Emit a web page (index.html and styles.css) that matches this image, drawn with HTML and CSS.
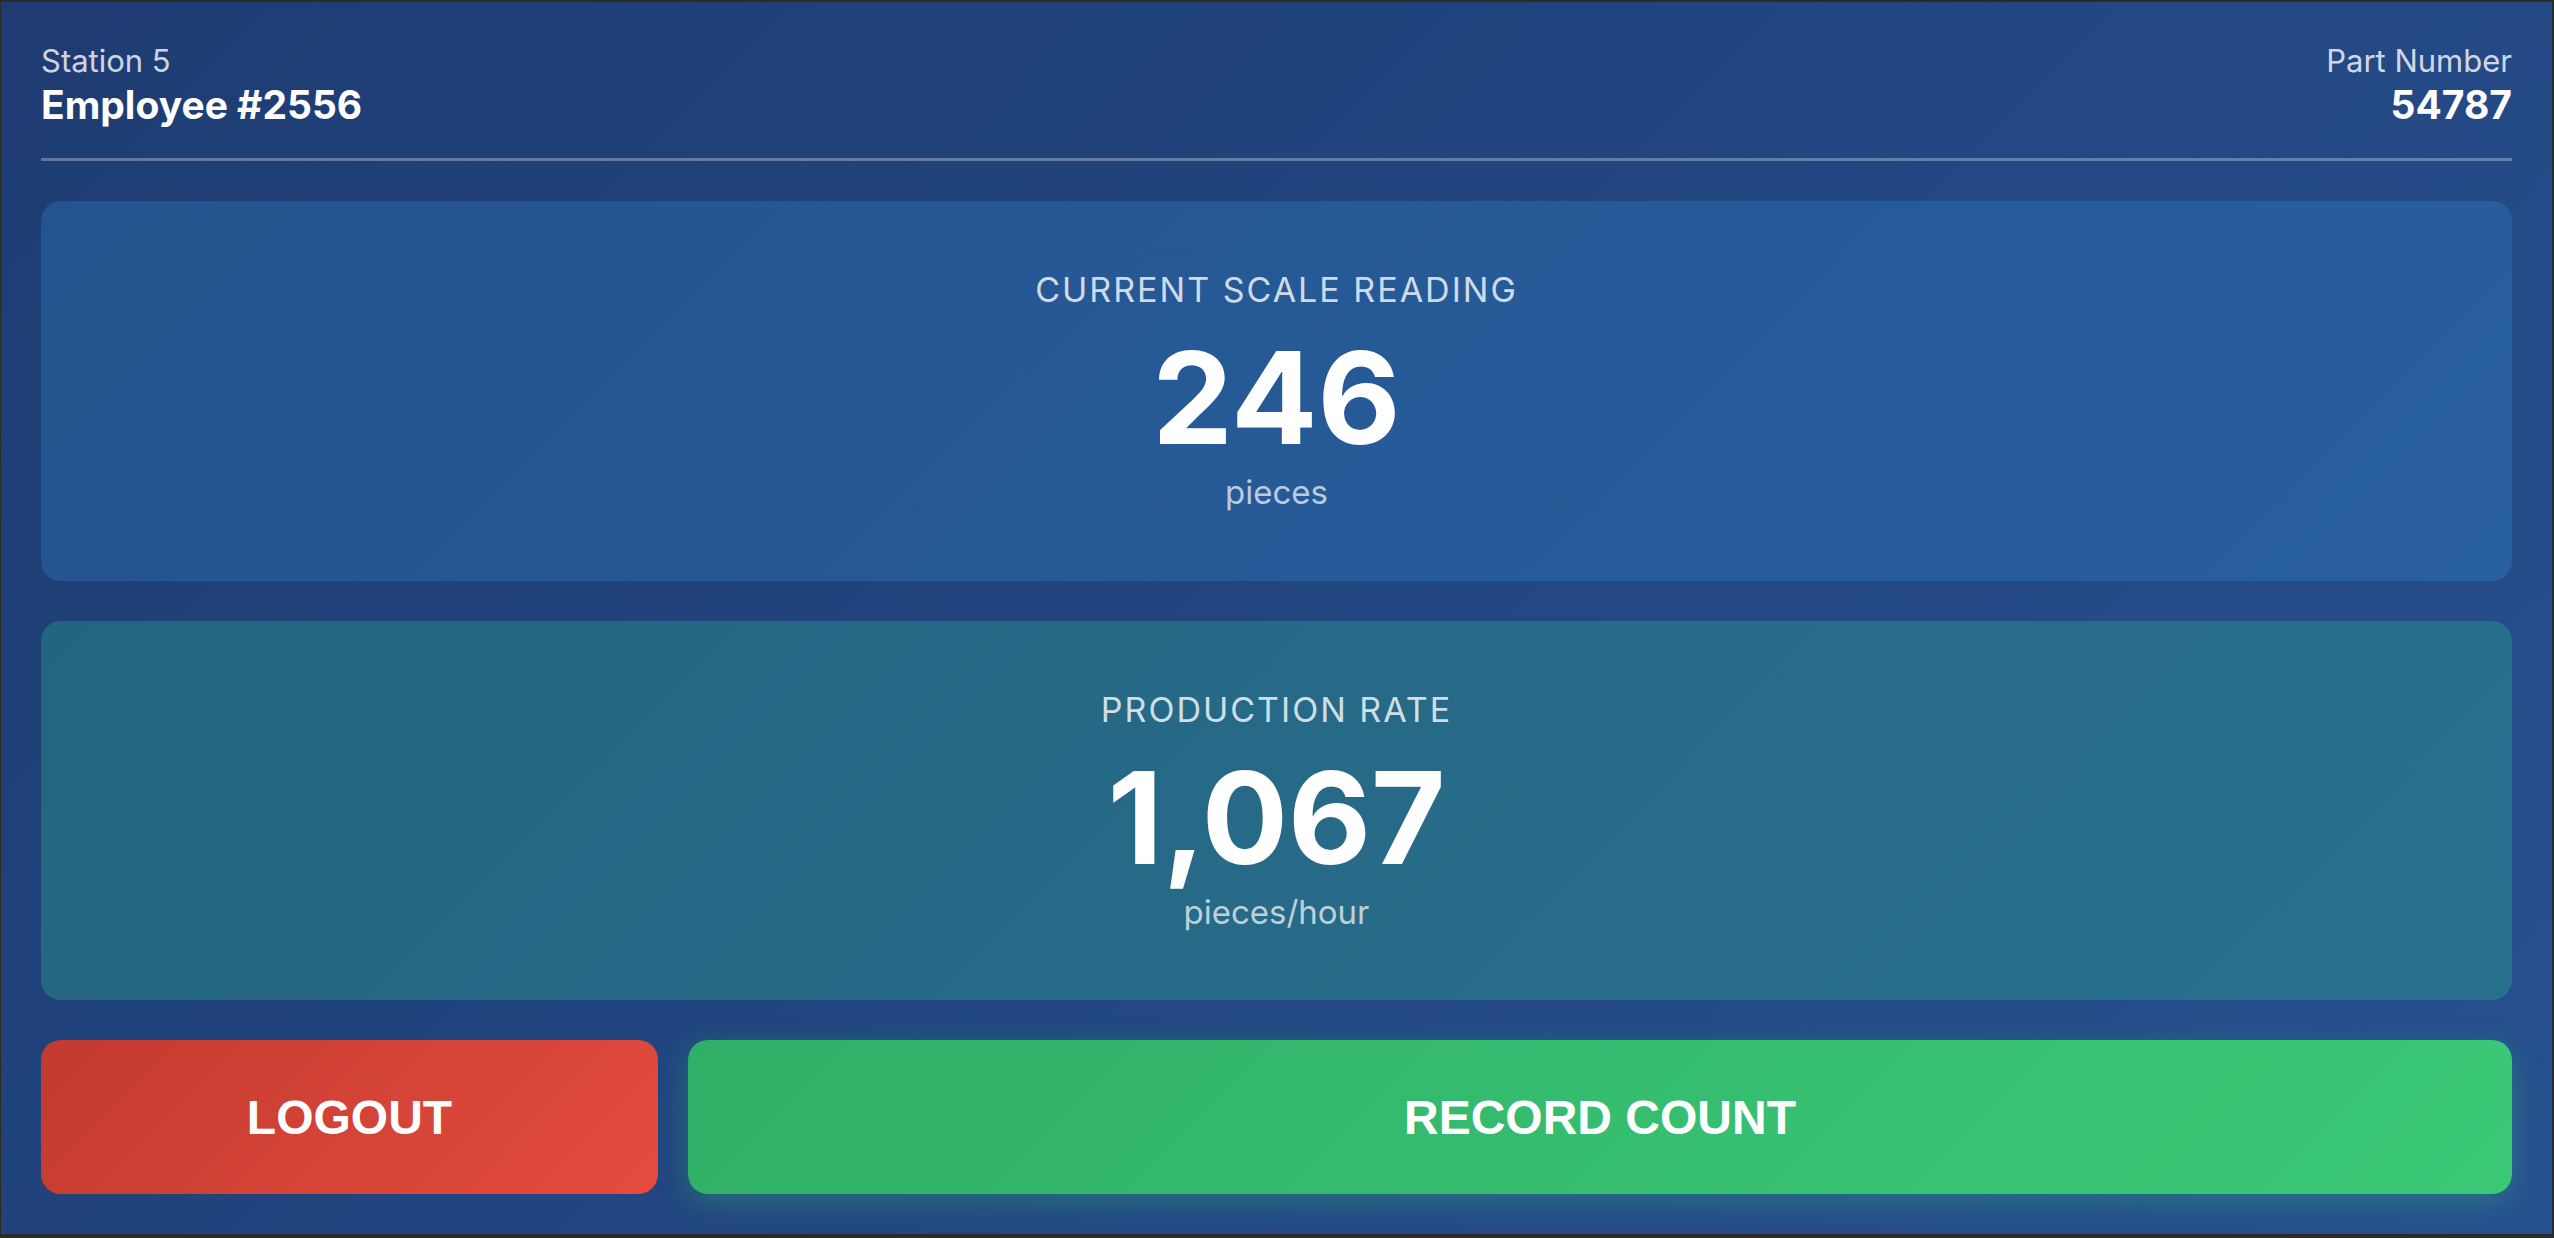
FILE: index.html
```html
<!DOCTYPE html>
<html lang="en">
<head>
<meta charset="utf-8">
<title>Station 5</title>
<link rel="stylesheet" href="styles.css">
</head>
<body>
<div class="app">
  <header class="header">
    <div class="header-left">
      <div class="label">Station 5</div>
      <div class="value">Employee #2556</div>
    </div>
    <div class="header-right">
      <div class="label">Part Number</div>
      <div class="value">54787</div>
    </div>
  </header>
  <section class="card card-scale">
    <div class="card-title">CURRENT SCALE READING</div>
    <div class="card-number">246</div>
    <div class="card-unit">pieces</div>
  </section>
  <section class="card card-rate">
    <div class="card-title">PRODUCTION RATE</div>
    <div class="card-number">1,067</div>
    <div class="card-unit">pieces/hour</div>
  </section>
  <div class="actions">
    <button class="btn btn-logout">LOGOUT</button>
    <button class="btn btn-record">RECORD COUNT</button>
  </div>
</div>
</body>
</html>
```
FILE: styles.css
```css
* { box-sizing: border-box; }
html, body { margin: 0; padding: 0; height: 100%; }
body {
  background: #2b2b2b;
  font-family: Inter, "Noto Sans", "Liberation Sans", sans-serif;
  color: #fff;
  overflow: hidden;
}
.app {
  margin: 2px 2px 4px 1px;
  height: calc(100vh - 6px);
  padding: 40px;
  display: flex;
  flex-direction: column;
  gap: 40px;
  background: linear-gradient(135deg, #1e3c72 0%, #27508f 100%);
}
.header {
  display: flex;
  justify-content: space-between;
  align-items: flex-start;
  padding-bottom: 30px;
  border-bottom: 3px solid rgba(255, 255, 255, 0.3);
}
.header-right { text-align: right; }
.label {
  font-size: 31px;
  color: rgba(255, 255, 255, 0.8);
  margin-bottom: 2px;
}
.value {
  font-size: 39px;
  font-weight: 700;
}
.card {
  flex: 1;
  border-radius: 20px;
  display: flex;
  flex-direction: column;
  align-items: center;
  justify-content: center;
}
.card-scale { background: rgba(52, 152, 219, 0.26); }
.card-rate { background: rgba(46, 190, 150, 0.3); }
.card-title {
  font-size: 34px;
  letter-spacing: 2px;
  color: rgba(255, 255, 255, 0.8);
  margin-bottom: 24px;
}
.card-number {
  font-size: 128px;
  font-weight: 700;
  line-height: 1;
}
.card-unit {
  font-size: 33px;
  color: rgba(255, 255, 255, 0.7);
  margin-top: 10px;
}
.actions {
  display: grid;
  grid-template-columns: 617px 1fr;
  gap: 30px;
  height: 154px;
}
.btn {
  border: none;
  border-radius: 20px;
  color: #fff;
  font-family: "Liberation Sans", Arial, sans-serif;
  font-weight: 700;
  font-size: 48px;
  cursor: pointer;
}
.btn-logout {
  background: linear-gradient(135deg, #c23a2e 0%, #e54c3f 100%);
}
.btn-record {
  background: linear-gradient(135deg, #30b067 0%, #3bc978 100%);
  box-shadow: 0 8px 30px rgba(46, 204, 113, 0.3);
}
```
